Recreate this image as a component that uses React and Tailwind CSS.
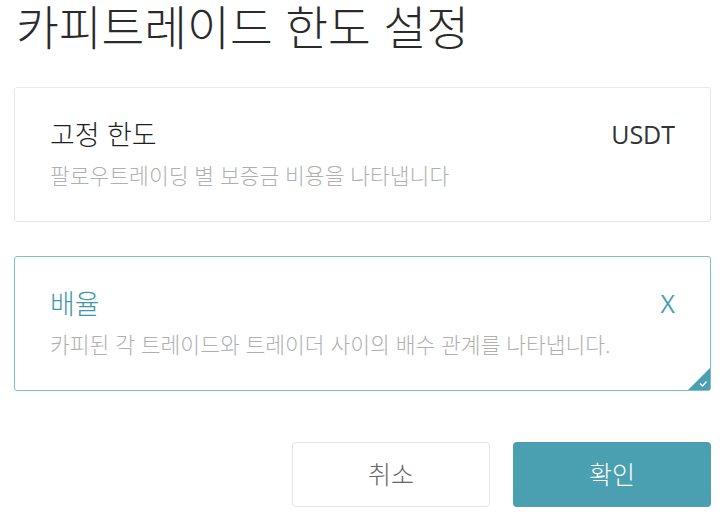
import React from "react";

const font = { fontFamily: 'Lato, "Noto Sans CJK KR", sans-serif' };
const unitFont = { fontFamily: '"Open Sans", sans-serif' };

const LimitCard = ({ title, desc, unit, active }) => {
  return (
    <div
      className={`relative flex h-[135px] w-[697px] items-center justify-between rounded-[3px] border bg-white px-[35px] ${
        active ? "border-[#7cc0cd]" : "border-[#e6e6e8]"
      }`}
    >
      <div className="flex flex-col">
        <span
          className={`text-[27px] font-light leading-[28px] ${
            active ? "text-[#3f98aa]" : "text-[#1f1f1f]"
          }`}
        >
          {title}
        </span>
        <span className="mt-[14px] text-[21.5px] font-light leading-[26px] text-[#b0b0b0]">
          {desc}
        </span>
      </div>
      <span
        style={unitFont}
        className={`mb-[42px] text-[25px] font-normal leading-[28px] ${
          active ? "text-[#4a9fb0]" : "text-[#333333]"
        }`}
      >
        {unit}
      </span>
      {active && (
        <svg
          className="absolute bottom-0 right-0"
          width="22"
          height="22"
          viewBox="0 0 22 22"
        >
          <path d="M22 0 L22 22 L0 22 Z" fill="#4a9fb0" />
          <path
            d="M12 15.5 L14.5 18 L18.5 13.5"
            fill="none"
            stroke="#ffffff"
            strokeWidth="1.4"
          />
        </svg>
      )}
    </div>
  );
};

export default function App() {
  return (
    <div className="min-h-[521px] bg-white pl-[14px] pt-[2px]" style={font}>
      <h1 className="pl-[2px] text-[46.5px] font-light leading-[50px] text-[#2a2a2a]">
        카피트레이드 한도 설정
      </h1>
      <div className="mt-[35px] flex flex-col gap-[34px]">
        <LimitCard
          title="고정 한도"
          desc="팔로우트레이딩 별 보증금 비용을 나타냅니다"
          unit="USDT"
        />
        <LimitCard
          title="배율"
          desc="카피된 각 트레이드와 트레이더 사이의 배수 관계를 나타냅니다."
          unit="X"
          active
        />
      </div>
      <div className="mt-[51px] flex w-[697px] justify-end gap-[23px]">
        <button className="h-[65px] w-[198px] rounded-[4px] border border-[#e4e4e8] bg-white text-[25px] font-light text-[#666666]">
          취소
        </button>
        <button className="h-[65px] w-[198px] rounded-[4px] bg-[#4aa0b1] text-[25px] font-light text-white">
          확인
        </button>
      </div>
    </div>
  );
}
